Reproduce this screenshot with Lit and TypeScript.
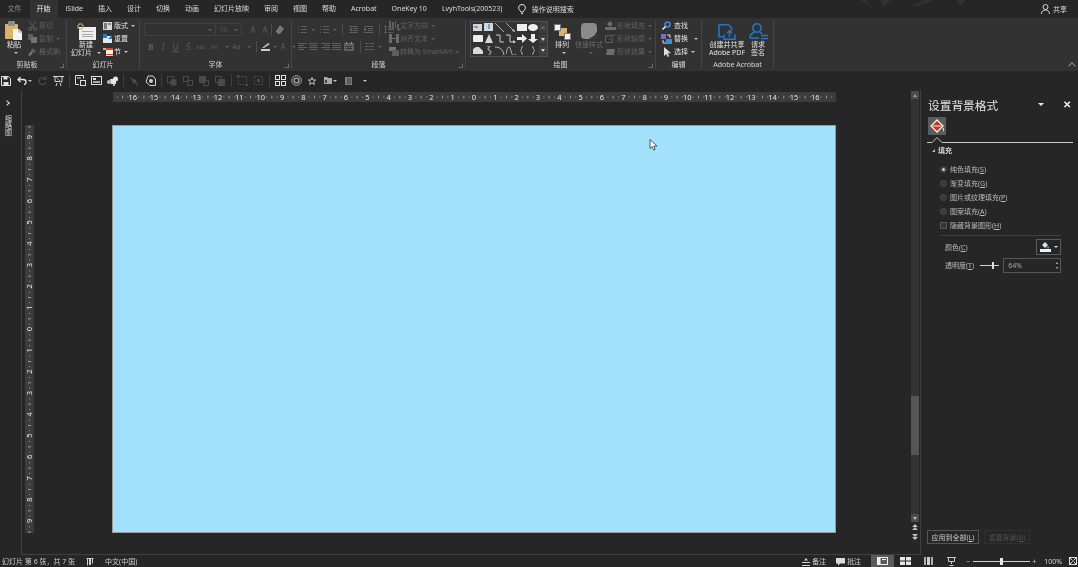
import { LitElement, html, css, svg, nothing } from "lit";
import { customElement } from "lit/decorators.js";

const G = "#5e5e5e";
const B = "#1f78d1";
const T = "#d9b36c";

const ic = (w: number, h: number, c: unknown) =>
  html`<svg class="ic" width=${w} height=${h} viewBox="0 0 ${w} ${h}">${c}</svg>`;
const bars = (col: string, rows: number[][]) =>
  rows.map(([x, y, w]) => svg`<rect x=${x} y=${y} width=${w} height="1" fill=${col}/>`);

const I: Record<string, unknown> = {
  paste: ic(18, 19, svg`<rect x="0" y="3" width="13" height="15" rx="1" fill=${T}/><rect x="3" y="0" width="7" height="5" rx="1" fill="#8c8c8c"/><path d="M8 8h6l3 3v8H8z" fill="#f4f4f4"/><path d="M14 8v3h3" fill="none" stroke="#999"/>`),
  cut: ic(9, 10, svg`<path d="M1 0l5 7M8 0L3 7" stroke=${G} fill="none"/><circle cx="2" cy="8" r="1.5" fill="none" stroke=${G}/><circle cx="7" cy="8" r="1.5" fill="none" stroke=${G}/>`),
  copy: ic(9, 9, svg`<rect x="0" y="0" width="5" height="6" fill=${G}/><rect x="3" y="3" width="6" height="6" fill="#747474"/>`),
  brush: ic(9, 9, svg`<path d="M4 1l4 3-2 2-3-2z" fill=${G}/><path d="M3 4l2 2-3 3-2-1z" fill="#747474"/>`),
  newslide: ic(19, 17, svg`<rect x="2" y="4" width="17" height="13" fill="#eee"/>${bars("#aaa", [[5, 8, 11], [5, 11, 11], [5, 13, 11]])}<circle cx="3.5" cy="3.5" r="2.6" fill="none" stroke=${T} stroke-width="1.6" stroke-dasharray="1.4 .6"/>`),
  layout: ic(9, 8, svg`<rect width="9" height="8" fill="#d8d8d8"/><rect x="1" y="1" width="3" height="6" fill="#777"/><rect x="5" y="1" width="3" height="2" fill="#888"/>`),
  reset: ic(9, 9, svg`<rect y="2" width="9" height="7" fill="#e8e8e8"/><path d="M0 0h4v4H0z" fill=${B}/><path d="M5 5l4-4v4z" fill=${B}/>`),
  section: ic(10, 9, svg`<rect x="3" y="1" width="7" height="8" fill="#eee"/><rect x="3" y="1" width="7" height="2" fill="#d9482b"/><rect x="3" y="7" width="7" height="1" fill="#d9482b"/><path d="M0 1h3v2H0z" fill=${T}/>`),
  bullets: ic(9, 8, svg`${bars(G, [[0, 0, 1], [3, 0, 6], [0, 3, 1], [3, 3, 6], [0, 6, 1], [3, 6, 6]])}`),
  indentL: ic(9, 8, svg`${bars(G, [[0, 0, 9], [4, 2, 5], [4, 4, 5], [0, 6, 9]])}<path d="M3 1.500v4L0 3.500z" fill=${G}/>`),
  indentR: ic(9, 8, svg`${bars(G, [[0, 0, 9], [4, 2, 5], [4, 4, 5], [0, 6, 9]])}<path d="M0 1.500v4l3-2z" fill=${G}/>`),
  spacing: ic(9, 9, svg`${bars(G, [[4, 1, 5], [4, 4, 5], [4, 7, 5]])}<path d="M1.500 0l1.500 2H0zM1.500 9L3 7H0zM1 2h1v5H1z" fill=${G}/>`),
  alignL: ic(9, 7, svg`${bars(G, [[0, 0, 9], [0, 2, 6], [0, 4, 9], [0, 6, 6]])}`),
  alignC: ic(9, 7, svg`${bars(G, [[0, 0, 9], [1, 2, 7], [0, 4, 9], [1, 6, 7]])}`),
  alignR: ic(9, 7, svg`${bars(G, [[0, 0, 9], [3, 2, 6], [0, 4, 9], [3, 6, 6]])}`),
  alignJ: ic(9, 7, svg`${bars(G, [[0, 0, 9], [0, 2, 9], [0, 4, 9], [0, 6, 9]])}`),
  distrib: ic(10, 9, svg`<rect y="1" width="10" height="8" fill=${G}/><rect x="2" width="1" height="2" fill="#999"/><rect x="7" width="1" height="2" fill="#999"/><rect x="2" y="4" width="6" height="1" fill="#333"/><rect x="2" y="6" width="6" height="1" fill="#333"/>`),
  cols: ic(9, 7, svg`${bars(G, [[0, 0, 4], [5, 0, 4], [0, 3, 4], [5, 3, 4], [0, 6, 4], [5, 6, 4]])}`),
  textdir: ic(10, 9, svg`<path d="M0 0h2v8H0zM3 1h2v8H3zM6 0h1v7H6zM8 3h2v6H8z" fill=${G}/>`),
  aligntext: ic(10, 9, svg`<path d="M0 0h3v9H0zM7 0h3v9H7z" fill="#6c6c6c"/><path d="M3 4h4v1H3z" fill="#6c6c6c"/>`),
  smartart: ic(10, 9, svg`<rect x="0" y="0" width="7" height="4" fill="#747474"/><rect x="3" y="3" width="7" height="6" fill=${G}/>`),
  arrange: ic(17, 16, svg`<rect x="5" y="4" width="8" height="8" fill=${T}/><rect x="0.500" y="0.500" width="6" height="6" fill="#f2f2f2" stroke="#777"/><rect x="10.500" y="9.500" width="6" height="6" fill="#f2f2f2" stroke="#777"/>`),
  quick: ic(17, 17, svg`<rect x="0" y="0" width="16" height="16" rx="4" fill="#8a8a8a"/><path d="M8 16l8-7v7z" fill="#3a3a3a"/><path d="M10 14l4-3" stroke="#aaa"/>`),
  shapefill: ic(11, 9, svg`<path d="M5 0l3 3-3 3-3-3z" fill="#6c6c6c"/><rect y="6" width="11" height="3" fill="#6c6c6c"/>`),
  shapeline: ic(11, 9, svg`<path d="M.5 1.500h7M.5 1.500v7h7V5" fill="none" stroke=${G}/><path d="M4 6l6-6" stroke=${G}/>`),
  shapefx: ic(11, 9, svg`<path d="M2 2h8L9 8H1z" fill="#6c6c6c"/>`),
  find: ic(9, 9, svg`<circle cx="5.500" cy="3.500" r="2.500" fill="none" stroke="#3e8ede" stroke-width="1.500"/><path d="M3.500 5.500L.5 8.500" stroke="#eee" stroke-width="1.500"/>`),
  replace: ic(11, 10, svg`<rect x="0" y="0" width="5" height="5" fill="#7d6bc2"/><rect x="5" y="5" width="6" height="5" fill="#3e8ede"/><path d="M6 1h3v3M5 9H2V6" fill="none" stroke="#e4e4e4"/>`),
  select: ic(8, 10, svg`<path d="M1 0v9l2.200-2 1.500 3 1.500-.7L4.700 6.300H8z" fill="#dedede"/>`),
  pdf: ic(18, 16, svg`<path d="M6 .8H1v12h4M6 .8h4.500l3 3v3" fill="none" stroke=${B} stroke-width="1.500"/><path d="M6 10.500v4.700h11v-4.700M11.500 13V6.500M9 9l2.500-2.500L14 9" fill="none" stroke=${B} stroke-width="1.500"/>`),
  sign: ic(19, 17, svg`<circle cx="8" cy="5" r="4.200" fill="none" stroke=${B} stroke-width="1.500"/><path d="M1 15c0-4 2-5 4.500-6M10.500 9c1 .4 2 1 2.500 2M1 15h9" fill="none" stroke=${B} stroke-width="1.500"/><path d="M12 12.500h7M12 15.500h7" stroke=${B} stroke-width="1.300"/>`),
  q_save: ic(10, 10, svg`<path d="M.5.5h7l2 2v7h-9z" fill="none" stroke="#e0e0e0"/><rect x="2.500" y="1" width="4" height="2.500" fill="#e0e0e0"/><rect x="2.500" y="6" width="5" height="3.500" fill="#e0e0e0"/>`),
  q_undo: ic(10, 9, svg`<path d="M3.500 1L1 3.500 3.500 6" fill="none" stroke="#e4e4e4" stroke-width="1.300"/><path d="M1 3.500h5c2 0 3 1.200 3 2.500s-1 2.500-2 2.500" fill="none" stroke="#e4e4e4" stroke-width="1.300"/>`),
  q_redo: ic(9, 9, svg`<path d="M7.500 3A3.500 3.500 0 1 0 8 6" fill="none" stroke="#4e4e4e" stroke-width="1.200"/><path d="M8 0v3.500H4.500" fill="none" stroke="#4e4e4e"/>`),
  q_present: ic(11, 11, svg`<path d="M0 1.500h11M2 1.500v5h7v-5" fill="none" stroke="#d4d4d4"/><path d="M4 8l-1 3M7 8l1 3" stroke="#d4d4d4"/><path d="M3 2l6 6" stroke="#999"/>`),
  q_a: ic(11, 11, svg`<path d="M.5.5h8v3M.5.500v9H4" fill="none" stroke="#dedede"/><rect x="5.500" y="5.500" width="5" height="5" fill="none" stroke="#dedede"/><rect x="2" y="2.500" width="4" height="1" fill="#dedede"/>`),
  q_b: ic(11, 9, svg`<rect x=".5" y=".5" width="10" height="8" fill="none" stroke="#dedede"/><rect x="2" y="2" width="3" height="2" fill="#dedede"/><rect x="2" y="5" width="7" height="2" fill="#aaa"/>`),
  q_c: ic(11, 10, svg`<path d="M3 3h6v5H4z" fill="#e6e6e6"/><circle cx="8.500" cy="3" r="2.500" fill="#e6e6e6"/><circle cx="2" cy="6" r="2" fill="#bbb"/><circle cx="7" cy="9" r="1.200" fill="#bbb"/>`),
  q_d: ic(10, 10, svg`<path d="M2 2l5 2 1 4-4-1z" fill="#4c4c4c"/><path d="M1 1l2 2M7 8l2 2" stroke="#4c4c4c"/>`),
  q_e: ic(11, 11, svg`<path d="M3 1h5l2.500 3v6.500H5L1 7z" fill="none" stroke="#d0d0d0"/><circle cx="6" cy="6" r="2" fill="#d0d0d0"/>`),
  q_f: ic(10, 10, svg`<rect x=".5" y=".5" width="6" height="6" fill="none" stroke="#4a4a4a"/><rect x="3.500" y="3.500" width="6" height="6" fill="#4a4a4a"/>`),
  q_g: ic(10, 10, svg`<rect x=".5" y=".5" width="5" height="5" fill="none" stroke="#4a4a4a"/><rect x="4.500" y="4.500" width="5" height="5" fill="none" stroke="#4a4a4a"/><rect x="4" y="4" width="2" height="2" fill="#4a4a4a"/>`),
  q_h: ic(10, 10, svg`<rect width="7" height="7" fill="#4a4a4a"/><rect x="4.500" y="4.500" width="5" height="5" fill="none" stroke="#4a4a4a"/>`),
  q_i: ic(10, 10, svg`<rect x=".5" y=".5" width="6" height="6" fill="none" stroke="#4a4a4a"/><rect x="3" y="3" width="7" height="7" fill="#4a4a4a"/>`),
  q_j: ic(11, 11, svg`<rect x="1.500" y="1.500" width="8" height="8" fill="none" stroke="#4a4a4a" stroke-dasharray="2 1"/><rect x="0" y="0" width="2" height="2" fill="#4a4a4a"/><rect x="9" y="9" width="2" height="2" fill="#4a4a4a"/>`),
  q_k: ic(11, 11, svg`<rect x="1.500" y="1.500" width="8" height="8" fill="none" stroke="#4a4a4a" stroke-dasharray="2 1"/><rect x="4" y="4" width="3" height="3" fill="#4a4a4a"/>`),
  q_grid: ic(11, 11, svg`<rect x=".5" y=".5" width="4" height="4" fill="none" stroke="#e2e2e2"/><rect x="6.500" y=".5" width="4" height="4" fill="none" stroke="#e2e2e2"/><rect x=".5" y="6.500" width="4" height="4" fill="none" stroke="#e2e2e2"/><rect x="6.500" y="6.500" width="4" height="4" fill="none" stroke="#e2e2e2"/>`),
  q_ring: ic(11, 11, svg`<circle cx="5.500" cy="5.500" r="4.800" fill="none" stroke="#a8a8a8"/><circle cx="5.500" cy="5.500" r="2.400" fill="none" stroke="#a8a8a8" stroke-width="1.400"/>`),
  q_star: ic(8, 8, svg`<path d="M4 .5l1 2.500h2.700L5.600 4.800l.8 2.700L4 6 1.600 7.500l.8-2.700L.3 3H3z" fill="none" stroke="#c0c0c0"/>`),
  q_folder: ic(8, 7, svg`<path d="M0 0h3l1 1h4v6H0z" fill="#a8a8a8"/><rect x="1" y="3" width="2" height="3" fill="#444"/>`),
  q_book: ic(7, 8, svg`<rect width="7" height="8" fill="#7a7a7a"/><rect x="2" y="1" width="4" height="6" fill="#5c5c5c"/>`),
  bulb: ic(8, 11, svg`<path d="M4 .5a3.300 3.300 0 0 0-2 6c.5.500.7 1 .7 1.500h2.600c0-.5.2-1 .7-1.500a3.300 3.300 0 0 0-2-6z" fill="none" stroke="#e4e4e4"/><path d="M3 9.700h2" stroke="#e4e4e4"/>`),
  user: ic(9, 10, svg`<circle cx="4.500" cy="3" r="2.500" fill="none" stroke="#d8d8d8"/><path d="M.5 10c0-2.500 1.500-4 4-4s4 1.500 4 4" fill="none" stroke="#d8d8d8"/>`),
  fillbtn: ic(14, 14, svg`<path d="M7 1l6 6-6 6-6-6z" fill="#c8321e" stroke="#f3f3f3" stroke-width="1.300"/><path d="M3 7h8" stroke="#f3f3f3"/><path d="M13 9c1 1.500 1 3 0 3.500" stroke="#f3f3f3" fill="none"/>`),
  colorbtn: ic(11, 11, svg`<path d="M5 0l3 3-3 3-3-3z" fill="#e0e0e0"/><circle cx="8" cy="5.500" r="1.300" fill="#2a8fd6"/><rect y="7" width="11" height="3" fill="#f0f0f0"/>`),
  notes: ic(8, 8, svg`<path d="M4 0l2 2.500H2z" fill="#d0d0d0"/>${bars("#d0d0d0", [[0, 4, 8], [0, 7, 8]])}`),
  comment: ic(9, 8, svg`<path d="M0 0h9v5.500H4L2 8V5.500H0z" fill="#dcdcdc"/>`),
  lang: ic(9, 8, svg`<path d="M.5.5h7M1.500.500v7M6.500.500v5" fill="none" stroke="#cfcfcf"/><rect x="3" y="1" width="2" height="6" fill="#cfcfcf"/>`),
  v1: ic(11, 8, svg`<rect x=".5" y=".5" width="10" height="7" fill="none" stroke="#f0f0f0"/><rect x="1" y="1" width="2.500" height="6" fill="#f0f0f0"/><rect x="5" y="2" width="4" height="1" fill="#f0f0f0"/>`),
  v2: ic(11, 8, svg`<rect width="5" height="3.500" fill="#e8e8e8"/><rect x="6" width="5" height="3.500" fill="#e8e8e8"/><rect y="4.500" width="5" height="3.500" fill="#e8e8e8"/><rect x="6" y="4.500" width="5" height="3.500" fill="#e8e8e8"/>`),
  v3: ic(9, 8, svg`<rect width="2" height="8" fill="#b0b0b0"/><rect x="3" width="3" height="8" fill="#d0d0d0"/><rect x="7" width="2" height="8" fill="#b0b0b0"/>`),
  v4: ic(9, 9, svg`<path d="M0 .5h9M1.500.5v4h6v-4" fill="none" stroke="#c8c8c8"/><path d="M4.500 4.500V7M2.500 8.500h4" stroke="#c8c8c8"/>`),
  fit: ic(8, 8, svg`<rect x=".5" y=".5" width="7" height="7" fill="none" stroke="#e0e0e0"/><path d="M1 1l2.500 2.500M7 1L4.500 3.500M1 7l2.500-2.500M7 7L4.500 4.500" stroke="#e0e0e0"/>`),
  prev: ic(6, 7, svg`<path d="M3 0l3 3H0zM3 3l3 3H0z" fill="#bfbfbf"/>`),
  next: ic(6, 7, svg`<path d="M0 0h6L3 3zM0 3h6L3 6z" fill="#bfbfbf"/>`),
};

const TB = "#6f9fd0";
const shp = (c: unknown) => ic(10, 9, c);
const SHAPES = [
  shp(svg`<rect width="9" height="7" y="1" fill="#d6d6d6"/><rect x="1" y="3" width="4" height="2" fill=${TB}/>`),
  shp(svg`<rect width="9" height="8" fill="#d6d6d6"/><rect x="4" y="1" width="2" height="5" fill=${TB}/>`),
  shp(svg`<path d="M0 0l9 9" stroke="#a8a8a8"/>`),
  shp(svg`<path d="M0 0l8 8" stroke="#a8a8a8"/><path d="M9 9L6 8l2-2z" fill="#ccc"/>`),
  shp(svg`<rect y="1" width="10" height="7" fill="#eeeeee"/>`),
  shp(svg`<ellipse cx="5" cy="4.500" rx="5" ry="3.500" fill="#eeeeee"/>`),
  shp(svg`<rect y="1" width="10" height="7" rx="1" fill="#eeeeee"/>`),
  shp(svg`<path d="M5 0l4 9H1z" fill="#d8d8d8"/>`),
  shp(svg`<path d="M1 1h4v7h4" fill="none" stroke="#c8c8c8"/>`),
  shp(svg`<path d="M0 1h4v7h3" fill="none" stroke="#c8c8c8"/><path d="M10 8L7 6v4z" fill="#ccc"/>`),
  shp(svg`<path d="M0 3h5V0l5 4.500L5 9V6H0z" fill="#eeeeee"/>`),
  shp(svg`<path d="M3 0h4v5h3L5 9 0 5h3z" fill="#eeeeee"/>`),
  shp(svg`<path d="M0 8V3l3-2h3l4 4v3z" fill="#d8d8d8"/>`),
  shp(svg`<path d="M3 0h3L4 3l3 3-2 3" fill="none" stroke="#999" stroke-width="1.300"/>`),
  shp(svg`<path d="M0 1c4 0 8 2 9 8" fill="none" stroke="#bbb"/>`),
  shp(svg`<path d="M0 8c2-10 4-8 5-3s3 5 5 3" fill="none" stroke="#bbb"/>`),
  shp(svg`<path d="M6 .5C4 .5 5 4 3.500 4.500 5 5 4 8.500 6 8.500" fill="none" stroke="#bbb"/>`),
  shp(svg`<path d="M4 .5C6 .5 5 4 6.500 4.500 5 5 6 8.500 4 8.500" fill="none" stroke="#bbb"/>`),
];

const caret = html`<span class="car"></span>`;

const sm = (icon: unknown, label: string, opts: { dis?: boolean; car?: boolean } = {}) =>
  html`<div class="sb ${opts.dis ? "dis" : ""}"><span class="sbi">${icon}</span><span>${label}</span>${opts.car ? caret : nothing}</div>`;

const lg = (icon: unknown, lines: unknown[], cls = "") =>
  html`<div class="lg ${cls}"><span class="lgi">${icon}</span>${lines.map((l) => html`<span class="ll">${l}</span>`)}</div>`;

@customElement("app-root")
export class AppRoot extends LitElement {
  static styles = css`
    :host { display: block; width: 1078px; height: 567px; overflow: hidden; background: #262626; }
    * { box-sizing: border-box; }
    .app { width: 1078px; height: 567px; display: flex; flex-direction: column; background: #262626; color: #e0e0e0;
      font: 7px/1 "Noto Sans", "Noto Sans CJK SC", sans-serif; filter: blur(0.3px); overflow: hidden; }
    .ic { display: block; flex: none; }

    .tabs { height: 18px; flex: none; display: flex; align-items: center; position: relative; color: #dcdcdc; background: #262626; }
    .tab { padding: 0 7px; margin: 0 0.5px; height: 18px; line-height: 18px; white-space: nowrap; }
    .tab.file { color: #8b8b8b; }
    .tab.on { background: #323232; color: #f0f0f0; }
    .bulb { margin-left: 8px; margin-right: 6px; }
    .share { margin-left: auto; display: flex; align-items: center; gap: 3px; padding-right: 11px; }
    .deco { position: absolute; left: 860px; top: 0; }

    .ribbon { height: 53px; flex: none; display: flex; padding: 2px 0; background: #323232; position: relative; color: #e2e2e2; }
    .g { display: flex; flex-direction: column; border-right: 1px solid #454545; position: relative; flex: none; }
    .g1 { width: 67px; } .g2 { width: 73px; } .g3 { width: 152px; } .g4 { width: 174px; }
    .g5 { width: 190px; } .g6 { width: 46px; } .g7 { width: 72px; }
    .body { height: 40px; display: flex; flex: none; }
    .lab { height: 9px; line-height: 9px; text-align: center; color: #d8d8d8; white-space: nowrap; }
    .labspace { display: inline-block; width: 12px; }
    .launch { position: absolute; right: 2px; bottom: 1px; width: 5px; height: 5px; border: 1px solid #6a6a6a; border-top-color: transparent; border-left-color: transparent; }
    .collapse { position: absolute; right: 3px; bottom: 2px; width: 6px; height: 6px; border-left: 1px solid #999; border-top: 1px solid #999; transform: rotate(45deg) scale(.9); }

    .lg { display: flex; flex-direction: column; align-items: center; flex: none; }
    .lgi { height: 20px; display: flex; align-items: flex-end; margin-bottom: 1px; }
    .ll { height: 8px; line-height: 8px; white-space: nowrap; display: flex; align-items: center; gap: 2px; }
    .lgdis { color: #6a6a6a; }

    .stack { display: flex; flex-direction: column; margin-top: -1px; flex: none; }
    .sb { height: 13px; display: flex; align-items: center; white-space: nowrap; }
    .sbi { width: 11px; display: flex; justify-content: center; margin-right: 1px; flex: none; }
    .sb.dis { color: #636363; }
    .car { display: inline-block; flex: none; width: 0; height: 0; margin-left: 3px; border: 2px solid transparent; border-top: 2.500px solid #c4c4c4; border-bottom: 0; }
    .dis .car, .car.d { border-top-color: #5e5e5e; }

    .g1b { padding-left: 5px; gap: 4px; }
    .g1b .lg { width: 18px; }
    .g2b { padding-left: 6px; gap: 3px; }
    .g2b .lg { width: 26px; }

    .g3b, .g4l { display: flex; flex-direction: column; gap: 4px; padding-top: 3px; }
    .g3b { padding-left: 4px; }
    .fr { display: flex; align-items: center; height: 13px; color: #5c5c5c; }
    .sel { height: 13px; border: 1px solid #3f3f3f; display: flex; align-items: center; justify-content: flex-end; padding: 0 3px; color: #555; font-size: 7px; flex: none; }
    .sel.a { width: 72px; }
    .sel.b { width: 27px; margin-left: -1px; justify-content: space-between; }
    .vs { width: 1px; height: 12px; background: #4c4c4c; flex: none; }
    .fb { text-align: center; flex: none; font-size: 8px; }
    .fs6 { font-size: 6px; } .fs7 { font-size: 7px; }
    .w12 { width: 12px; } .w13 { width: 13px; } .w15 { width: 15px; }
    .fr2 { padding-left: 1px; }
    .sa { margin-left: 5px; } .sb2 { margin-left: 4px; } .sc { margin-left: 3px; }
    .pen { display: flex; flex-direction: column; gap: 1px; margin: 0 0 0 4px; }
    .penl { width: 9px; height: 2px; background: #cfcfcf; }
    .g4b { padding-left: 6px; }
    .g4l { width: 84px; }
    .g4l .fr { gap: 1px; }
    .gp { width: 11px; display: flex; justify-content: flex-start; }
    .g4r { margin-left: 6px; }

    .g5b { padding-left: 4px; }
    .gal { width: 78px; height: 36px; margin-top: 1px; border: 1px solid #505050; display: flex; flex: none; }
    .cells { flex: 1; display: grid; grid-template-columns: repeat(6, 1fr); align-items: center; justify-items: center; padding: 0 1px; }
    .gs { width: 8px; display: flex; flex-direction: column; background: #3e3e3e; }
    .gs span { flex: 1; display: flex; align-items: center; justify-content: center; border-top: 1px solid #2e2e2e; }
    .gs span:first-child { border-top: 0; }
    .gs i { width: 0; height: 0; border: 2px solid transparent; border-top: 3px solid #d0d0d0; border-bottom: 0; }
    .gs i.up { border-top: 0; border-bottom: 3px solid #666; }
    .g5b .arr { width: 20px; margin-left: 4px; }
    .g5b .qk { width: 30px; margin-left: 2px; }
    .g5b .stack { margin-left: 1px; }
    .g6b { padding-left: 5px; }
    .g6b .sbi { margin-right: 2px; }
    .gapcar { margin-left: 6px; }
    .g7b { padding-left: 3px; }
    .g7b .lg { width: 44px; }
    .g7b .lg.s { width: 18px; }

    .qat { height: 19px; flex: none; display: flex; align-items: center; margin-left: -2px; background: #262626; }
    .q { width: 16px; display: flex; align-items: center; justify-content: center; flex: none; }
    .q.w { width: 20px; }
    .qs { width: 6px; display: flex; justify-content: center; flex: none; }
    .qs::before { content: ""; width: 1px; height: 13px; background: #3e3e3e; }
    .q .car { margin-left: 1px; }

    .main { flex: 1; min-height: 0; display: flex; }
    .left { width: 22px; flex: none; border-right: 1px solid #404040; display: flex; flex-direction: column; align-items: center; padding: 9px 5px 0 0; gap: 10px; }
    .chev { width: 4px; height: 4px; border-right: 1.500px solid #e0e0e0; border-top: 1.500px solid #e0e0e0; transform: rotate(45deg); margin: 2px 2px 0 0; }
    .vtxt { writing-mode: vertical-rl; color: #d8d8d8; font-size: 7px; letter-spacing: -0.2px; }
    .work { flex: 1; min-width: 0; display: flex; border-bottom: 1px solid #404040; height: 465px; }
    .canvas { flex: 1; min-width: 0; display: grid; grid-template-columns: 90px 724px; grid-template-rows: 10px 408px; row-gap: 23px; padding-top: 2px; align-content: start; }
    .hr { grid-column: 2; grid-row: 1; background: #3c3c3c; margin-left: 1px; overflow: hidden; }
    .vr { grid-column: 1; grid-row: 2; width: 9px; margin-left: 3px; background: #3c3c3c; }
    .slide { grid-column: 2; grid-row: 2; background: #a3e0fb; border: 1px solid #9a9a9a; position: relative; }
    .cursor { position: absolute; left: 536px; top: 13px; }
    .rt { font: 7.500px "Noto Sans", sans-serif; fill: #e4e4e4; text-anchor: middle; }
    .sbar { width: 8px; flex: none; display: flex; flex-direction: column; align-items: stretch; margin: 1px 1px 0 0; }
    .track { height: 431px; flex: none; display: flex; flex-direction: column; background: #343434; }
    .up, .dn { height: 8px; flex: none; background: #4c4c4c; display: flex; align-items: center; justify-content: center; }
    .up i, .dn i { width: 0; height: 0; border: 2.500px solid transparent; }
    .up i { border-top: 0; border-bottom: 3px solid #999; }
    .dn i { border-bottom: 0; border-top: 3px solid #bbb; }
    .thumb { height: 59px; margin-top: 297px; background: #565656; flex: none; }
    .dn { margin-top: auto; }
    .pn { display: flex; flex-direction: column; align-items: center; gap: 3px; margin-top: 2px; }

    .panel { width: 158px; flex: none; border-left: 1px solid #404040; display: flex; flex-direction: column; height: 465px; color: #bcbcbc; }
    .ph { height: 27px; flex: none; padding: 3px 7px 0 7px; display: flex; align-items: center; color: #e2e2e2; }
    .pt { font-size: 11.700px; line-height: 14px; flex: 1; white-space: nowrap; }
    .pdown { width: 0; height: 0; border: 3px solid transparent; border-top: 3.500px solid #e8e8e8; border-bottom: 0; margin: 0 18px 2px 0; }
    .px { font-size: 10px; font-weight: 700; color: #f0f0f0; width: 9px; text-align: center; margin-bottom: 2px; }
    .fillb { width: 18px; height: 18px; margin-left: 7px; background: #5c5c5c; display: flex; align-items: center; justify-content: center; flex: none; }
    .tline { display: block; margin-left: 6px; flex: none; }
    .sh { height: 10px; margin-top: 1px; display: flex; align-items: center; padding-left: 11px; gap: 3px; color: #d4d4d4; font-weight: 700; flex: none; }
    .tri { width: 0; height: 0; border-left: 3px solid transparent; border-bottom: 3px solid #bdbdbd; }
    .opts { margin-top: 7px; padding-left: 19px; display: flex; flex-direction: column; flex: none; }
    .opt { height: 14px; display: flex; align-items: center; gap: 3px; white-space: nowrap; }
    .radio { width: 7px; height: 7px; border-radius: 50%; background: #3a3a3a; border: 1px solid #4a4a4a; flex: none; display: flex; align-items: center; justify-content: center; }
    .radio.on::after { content: ""; width: 3px; height: 3px; border-radius: 50%; background: #d0d0d0; }
    .cb { width: 7px; height: 7px; background: #363636; border: 1px solid #575757; flex: none; }
    .divi { height: 1px; background: #404040; margin: 3px 17px 3px 19px; flex: none; }
    .row { display: flex; align-items: center; padding: 0 17px 0 24px; flex: none; }
    .rl { flex: none; white-space: nowrap; }
    .cbtn { margin-left: auto; width: 25px; height: 16px; border: 1px solid #5a5a5a; display: flex; align-items: center; justify-content: center; gap: 2px; }
    .cbtn .car { margin-left: 1px; border-top-color: #e0e0e0; }
    .r2 { margin-top: 3px; height: 15px; }
    .slider { width: 19px; height: 1px; background: #cfcfcf; margin-left: 6px; position: relative; flex: none; }
    .slider::after { content: ""; position: absolute; left: 12px; top: -3px; width: 2px; height: 7px; background: #dcdcdc; }
    .spin { margin-left: 4px; flex: 1; height: 15px; border: 1px solid #565656; display: flex; align-items: center; justify-content: space-between; padding: 0 2px 0 4px; color: #a8a8a8; }
    .spa { display: flex; flex-direction: column; gap: 3px; }
    .spa i { display: block; width: 0; height: 0; border: 1.500px solid transparent; }
    .spa i.a { border-top: 0; border-bottom: 2px solid #c8c8c8; }
    .spa i.b { border-bottom: 0; border-top: 2px solid #c8c8c8; }
    .foot { margin-top: auto; padding: 0 0 11px 6px; display: flex; gap: 5px; flex: none; }
    .btn { height: 14px; padding: 0 3px; border: 1px solid #545454; display: flex; align-items: center; white-space: nowrap; color: #cacaca; width: 52px; justify-content: center; }
    .btn.off { border-color: #303030; color: #505050; width: 46px; }

    .status { height: 12px; flex: none; display: flex; align-items: center; color: #cecece; white-space: nowrap; padding-left: 2px; position: relative; }
    .status > span { padding-top: 1px; }
    .sl { margin-left: 11px; } .sl2 { margin-left: 10px; }
    .sr { margin-left: auto; display: flex; align-items: center; height: 12px; }
    .si { display: flex; align-items: center; gap: 2px; padding-top: 1px; }
    .si + .si { margin-left: 10px; }
    .views { display: flex; margin-left: 10px; height: 12px; }
    .vb { width: 23px; display: flex; align-items: center; justify-content: center; }
    .vb.on { background: #5a5a5a; }
    .zm { display: flex; align-items: center; margin-left: 3px; }
    .zs { width: 57px; height: 1px; background: #cfcfcf; margin: 0 2px 0 3px; position: relative; }
    .zs::after { content: ""; position: absolute; left: 27px; top: -3px; width: 3px; height: 7px; background: #e8e8e8; }
    .pct { margin-left: 8px; padding-top: 1px; }
    .fitb { margin: 0 1px 0 7px; }
  `;

  private hRuler() {
    const c = 361, u = 21.33;
    const parts: unknown[] = [];
    for (let n = -17; n <= 16; n++) {
      const x = c + n * u;
      if (Math.abs(n) <= 16) parts.push(svg`<text class="rt" x=${x} y="7.500">${Math.abs(n)}</text>`);
      parts.push(svg`<rect x=${x + u * 0.25} y="4.500" width="1" height="1" fill="#9a9a9a"/>`);
      parts.push(svg`<rect x=${x + u * 0.5} y="3.500" width="1" height="3" fill="#9a9a9a"/>`);
      parts.push(svg`<rect x=${x + u * 0.75} y="4.500" width="1" height="1" fill="#9a9a9a"/>`);
    }
    return html`<svg class="ic" width="723" height="10" viewBox="0 0 723 10">${parts}</svg>`;
  }

  private vRuler() {
    const c = 204, u = 21.33;
    const parts: unknown[] = [];
    for (let n = -10; n <= 9; n++) {
      const y = c + n * u;
      if (Math.abs(n) <= 9) parts.push(svg`<text class="rt" transform="translate(7 ${y}) rotate(-90)" x="0" y="0">${Math.abs(n)}</text>`);
      parts.push(svg`<rect x="4" y=${y + u * 0.25} width="1" height="1" fill="#9a9a9a"/>`);
      parts.push(svg`<rect x="3" y=${y + u * 0.5} width="3" height="1" fill="#9a9a9a"/>`);
      parts.push(svg`<rect x="4" y=${y + u * 0.75} width="1" height="1" fill="#9a9a9a"/>`);
    }
    return html`<svg class="ic" width="9" height="408" viewBox="0 0 9 408">${parts}</svg>`;
  }

  render() {
    const tabs = ["iSlide", "插入", "设计", "切换", "动画", "幻灯片放映", "审阅", "视图", "帮助", "Acrobat", "OneKey 10", "LvyhTools(200523)"];
    const q = (k: string) => html`<span class="q">${I[k]}</span>`;
    const qs = html`<span class="qs"></span>`;
    return html`<div class="app">
      <div class="tabs">
        <div class="tab file">文件</div>
        <div class="tab on">开始</div>
        ${tabs.map((t) => html`<div class="tab">${t}</div>`)}
        <span class="bulb">${I.bulb}</span>
        <span>操作说明搜索</span>
        <svg class="deco" width="150" height="7" viewBox="0 0 150 7"><path d="M0 0h6l5 6zM20 0h12l-8 6zM50 6l14-6h10l-16 6zM96 0h10l-5 6z" fill="#313131"/></svg>
        <div class="share">${I.user}<span>共享</span></div>
      </div>

      <div class="ribbon">
        <div class="g g1">
          <div class="body g1b">
            ${lg(I.paste, [html`<span>粘贴</span>`, caret])}
            <div class="stack">
              ${sm(I.cut, "剪切", { dis: true })}
              ${sm(I.copy, "复制", { dis: true, car: true })}
              ${sm(I.brush, "格式刷", { dis: true })}
            </div>
          </div>
          <div class="lab">剪贴板<span class="labspace"></span></div>
          <span class="launch"></span>
        </div>
        <div class="g g2">
          <div class="body g2b">
            ${lg(I.newslide, ["新建", html`<span>幻灯片</span>${caret}`])}
            <div class="stack">
              ${sm(I.layout, "版式", { car: true })}
              ${sm(I.reset, "重置")}
              ${sm(I.section, "节", { car: true })}
            </div>
          </div>
          <div class="lab">幻灯片</div>
        </div>
        <div class="g g3">
          <div class="body g3b">
            <div class="fr">
              <span class="sel a"><span class="car d"></span></span>
              <span class="sel b"><span>18</span><span class="car d"></span></span>
              <span class="fb w12 sa">A</span><span class="fb w12">A</span>
              <span class="vs"></span>
              <span class="sc">${ic(9, 9, svg`<path d="M5 0l4 4-4 5-4-3z" fill="#777"/><path d="M1 6l3 3" stroke="#999"/>`)}</span>
            </div>
            <div class="fr fr2">
              <span class="fb w12"><b>B</b></span><span class="fb w12"><i>I</i></span><span class="fb w13"><u>U</u></span><span class="fb w13">S</span>
              <span class="fb fs6 w12">abc</span><span class="fb fs6 w15">AV</span><span class="car d"></span>
              <span class="fb fs7 w15">Aa</span><span class="car d"></span>
              <span class="sa vs"></span>
              <span class="pen">${ic(9, 5, svg`<path d="M1 5L7 0l2 1-6 4z" fill="#bdbdbd"/>`)}<span class="penl"></span></span>
              <span class="car d"></span>
              <span class="fb w12">A</span><span class="car d"></span>
            </div>
          </div>
          <div class="lab">字体</div>
          <span class="launch"></span>
        </div>
        <div class="g g4">
          <div class="body g4b">
            <div class="g4l">
              <div class="fr">
                ${I.bullets}<span class="car d"></span>
                <span class="sb2">${I.bullets}</span><span class="car d"></span>
                <span class="sb2 vs"></span>
                <span class="sa">${I.indentL}</span><span class="sa">${I.indentR}</span>
                <span class="sa vs"></span>
                <span class="sc">${I.spacing}</span><span class="car d"></span>
              </div>
              <div class="fr">
                <span class="gp">${I.alignL}</span><span class="gp">${I.alignC}</span><span class="gp">${I.alignR}</span><span class="gp">${I.alignJ}</span>
                <span class="gp">${I.distrib}</span><span class="sa vs"></span>
                <span class="sc">${I.cols}</span><span class="car d"></span>
              </div>
            </div>
            <div class="stack g4r">
              ${sm(I.textdir, "文字方向", { dis: true, car: true })}
              ${sm(I.aligntext, "对齐文本", { dis: true, car: true })}
              ${sm(I.smartart, "转换为 SmartArt", { dis: true, car: true })}
            </div>
          </div>
          <div class="lab">段落</div>
          <span class="launch"></span>
        </div>
        <div class="g g5">
          <div class="body g5b">
            <div class="gal">
              <div class="cells">${SHAPES}</div>
              <div class="gs"><span><i class="up"></i></span><span><i></i></span><span><i></i></span></div>
            </div>
            <div class="arr">${lg(I.arrange, ["排列", caret])}</div>
            <div class="qk lgdis">${lg(I.quick, ["快速样式", html`<span class="car d"></span>`])}</div>
            <div class="stack">
              ${sm(I.shapefill, "形状填充", { dis: true, car: true })}
              ${sm(I.shapeline, "形状轮廓", { dis: true, car: true })}
              ${sm(I.shapefx, "形状效果", { dis: true, car: true })}
            </div>
          </div>
          <div class="lab">绘图</div>
          <span class="launch"></span>
        </div>
        <div class="g g6">
          <div class="body g6b">
            <div class="stack">
              ${sm(I.find, "查找")}
              <div class="sb"><span class="sbi">${I.replace}</span><span>替换</span><span class="car gapcar"></span></div>
              ${sm(I.select, "选择", { car: true })}
            </div>
          </div>
          <div class="lab">编辑</div>
        </div>
        <div class="g g7">
          <div class="body g7b">
            ${lg(I.pdf, ["创建并共享", "Adobe PDF"])}
            ${lg(I.sign, ["请求", "签名"], "s")}
          </div>
          <div class="lab">Adobe Acrobat</div>
        </div>
        <span class="collapse"></span>
      </div>

      <div class="qat">
        ${q("q_save")}
        <span class="q w">${I.q_undo}${caret}</span>
        ${q("q_redo")}${q("q_present")}${qs}
        ${q("q_a")}${q("q_b")}${q("q_c")}${qs}
        ${q("q_d")}${q("q_e")}${qs}
        ${q("q_f")}${q("q_g")}${q("q_h")}${q("q_i")}${qs}
        ${q("q_j")}${q("q_k")}${qs}
        ${q("q_grid")}${q("q_ring")}${q("q_star")}
        <span class="q w">${I.q_folder}${caret}</span>
        ${q("q_book")}
        <span class="q">${caret}</span>
      </div>

      <div class="main">
        <div class="left"><span class="chev"></span><span class="vtxt">缩略图</span></div>
        <div class="work">
          <div class="canvas">
            <div class="hr">${this.hRuler()}</div>
            <div class="vr">${this.vRuler()}</div>
            <div class="slide">
              <svg class="cursor" width="9" height="12" viewBox="0 0 9 12"><path d="M1 .5v9l2.200-2 1.500 3.500 1.600-.7-1.500-3.300H8z" fill="#fff" stroke="#333" stroke-width=".8"/></svg>
            </div>
          </div>
          <div class="sbar">
            <div class="track">
              <div class="up"><i></i></div>
              <div class="thumb"></div>
              <div class="dn"><i></i></div>
            </div>
            <div class="pn">${I.prev}${I.next}</div>
          </div>
        </div>
        <div class="panel">
          <div class="ph"><span class="pt">设置背景格式</span><span class="pdown"></span><span class="px">✕</span></div>
          <div class="fillb">${I.fillbtn}</div>
          <svg class="tline" width="146" height="9" viewBox="0 0 146 9"><path d="M0 7.500h5l5-5 5 5h131" fill="none" stroke="#c8c8c8"/></svg>
          <div class="sh"><span class="tri"></span><span>填充</span></div>
          <div class="opts">
            <div class="opt"><span class="radio on"></span><span>纯色填充(<u>S</u>)</span></div>
            <div class="opt"><span class="radio"></span><span>渐变填充(<u>G</u>)</span></div>
            <div class="opt"><span class="radio"></span><span>图片或纹理填充(<u>P</u>)</span></div>
            <div class="opt"><span class="radio"></span><span>图案填充(<u>A</u>)</span></div>
            <div class="opt"><span class="cb"></span><span>隐藏背景图形(<u>H</u>)</span></div>
          </div>
          <div class="divi"></div>
          <div class="row"><span class="rl">颜色(<u>C</u>)</span><span class="cbtn">${I.colorbtn}${caret}</span></div>
          <div class="row r2"><span class="rl">透明度(<u>T</u>)</span><span class="slider"></span><span class="spin"><span>64%</span><span class="spa"><i class="a"></i><i class="b"></i></span></span></div>
          <div class="foot"><span class="btn">应用到全部(<u>L</u>)</span><span class="btn off">重置背景(<u>B</u>)</span></div>
        </div>
      </div>

      <div class="status">
        <span>幻灯片 第 6 张，共 7 张</span>
        <span class="sl">${I.lang}</span>
        <span class="sl2">中文(中国)</span>
        <div class="sr">
          <span class="si">${I.notes}<span>备注</span></span>
          <span class="si">${I.comment}<span>批注</span></span>
          <div class="views">
            <span class="vb on">${I.v1}</span><span class="vb">${I.v2}</span><span class="vb">${I.v3}</span><span class="vb">${I.v4}</span>
          </div>
          <div class="zm"><span>−</span><span class="zs"></span><span>+</span></div>
          <span class="pct">100%</span>
          <span class="fitb">${I.fit}</span>
        </div>
      </div>
    </div>`;
  }
}
